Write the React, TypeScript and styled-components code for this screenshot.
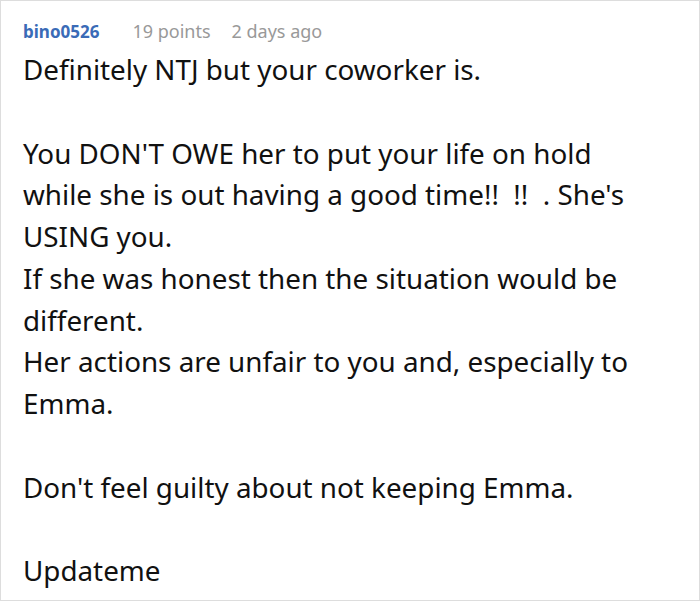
import React from "react";
import styled, { createGlobalStyle } from "styled-components";

const Global = createGlobalStyle`
  html, body { margin: 0; padding: 0; background: #fff; }
  body { font-family: "Noto Sans", "Open Sans", sans-serif; }
`;

const Card = styled.div`
  box-sizing: border-box;
  width: 700px;
  height: 601px;
  border: 1px solid #dddddd;
  background: #fff;
  padding: 16px 48px 0 22px;
  overflow: hidden;
`;

const Meta = styled.div`
  display: flex;
  align-items: baseline;
  line-height: 28px;
`;

const Author = styled.span`
  color: #3a6bb7;
  font-weight: 700;
  font-size: 17px;
`;

const MetaItem = styled.span<{ $gap: number }>`
  color: #999999;
  font-size: 18px;
  margin-left: ${(p) => p.$gap}px;
`;

const Body = styled.div`
  margin-top: 3px;
  font-size: 27.8px;
  line-height: 41.75px;
  color: #111;
  white-space: pre-wrap;
`;

const text = `Definitely NTJ but your coworker is.

You DON'T OWE her to put your life on hold while she is out having a good time!!  !!  . She's USING you.
If she was honest then the situation would be different.
Her actions are unfair to you and, especially to Emma.

Don't feel guilty about not keeping Emma.

Updateme`;

export default function App() {
  return (
    <>
      <Global />
      <Card>
        <Meta>
          <Author>bino0526</Author>
          <MetaItem $gap={33}>19 points</MetaItem>
          <MetaItem $gap={21}>2 days ago</MetaItem>
        </Meta>
        <Body>{text}</Body>
      </Card>
    </>
  );
}
